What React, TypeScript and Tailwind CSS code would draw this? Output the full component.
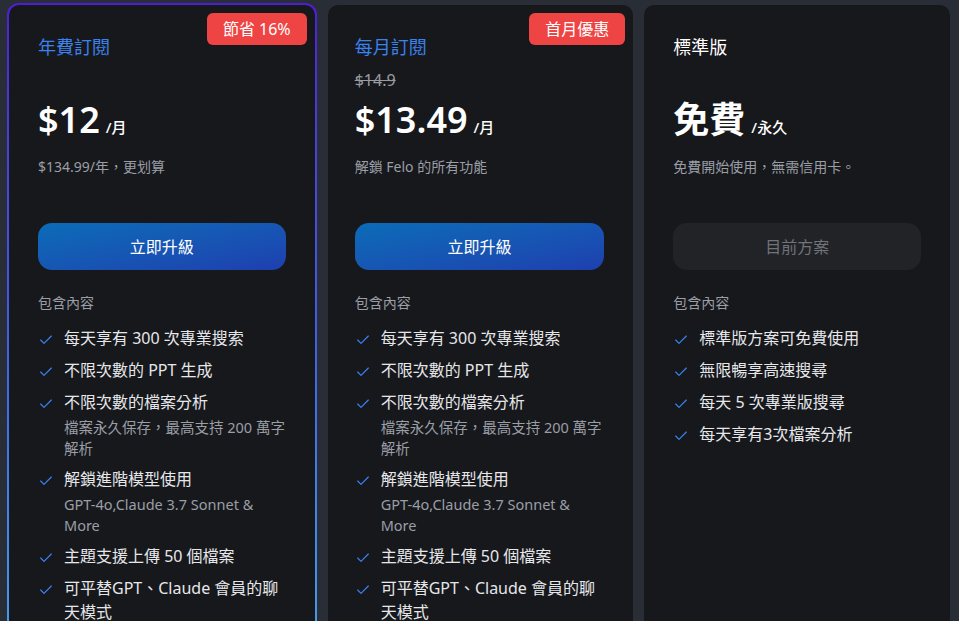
import { Check } from 'lucide-react';

interface Feature {
  text: string;
  sub?: string;
}

interface Plan {
  title: string;
  titleColor: string;
  pad: string;
  oldPrice?: string;
  price: string;
  unit: string;
  note: string;
  badge?: string;
  button: string;
  current?: boolean;
  highlight?: boolean;
  features: Feature[];
}

const proFeatures: Feature[] = [
  { text: '每天享有 300 次專業搜索' },
  { text: '不限次數的 PPT 生成' },
  { text: '不限次數的檔案分析', sub: '檔案永久保存，最高支持 200 萬字解析' },
  { text: '解鎖進階模型使用', sub: 'GPT-4o,Claude 3.7 Sonnet & More' },
  { text: '主題支援上傳 50 個檔案' },
  { text: '可平替GPT、Claude 會員的聊天模式' },
];

const plans: Plan[] = [
  {
    title: '年費訂閱',
    titleColor: 'text-[#3a82ec]',
    pad: 'px-[29px]',
    price: '$12',
    unit: '/月',
    note: '$134.99/年，更划算',
    badge: '節省 16%',
    button: '立即升級',
    highlight: true,
    features: proFeatures,
  },
  {
    title: '每月訂閱',
    titleColor: 'text-[#3a82ec]',
    pad: 'pl-[27px] pr-[29px]',
    oldPrice: '$14.9',
    price: '$13.49',
    unit: '/月',
    note: '解鎖 Felo 的所有功能',
    badge: '首月優惠',
    button: '立即升級',
    features: proFeatures,
  },
  {
    title: '標準版',
    titleColor: 'text-white',
    pad: 'px-[29px]',
    price: '免費',
    unit: '/永久',
    note: '免費開始使用，無需信用卡。',
    button: '目前方案',
    current: true,
    features: [
      { text: '標準版方案可免費使用' },
      { text: '無限暢享高速搜尋' },
      { text: '每天 5 次專業版搜尋' },
      { text: '每天享有3次檔案分析' },
    ],
  },
];

function PlanCard({ plan }: { plan: Plan }) {
  return (
    <div className={`relative h-full rounded-[10px] bg-[#17181c] pt-[28px] pb-10 ${plan.pad}`}>
      {plan.badge && (
        <div className="absolute top-[8px] right-[8px] h-8 rounded-md bg-[#ef4444] px-4 text-[16px] leading-8 text-white">
          {plan.badge}
        </div>
      )}
      <div className={`text-lg leading-7 ${plan.titleColor}`}>{plan.title}</div>
      <div className="mt-[7px] h-6 text-[16px] leading-6 text-[#9a9ca2] line-through">
        {plan.oldPrice}
      </div>
      <div className="mt-2 flex items-baseline gap-[6px]">
        <span className="text-[36px] font-semibold leading-10 text-white">{plan.price}</span>
        <span className="text-[15px] font-medium text-white">{plan.unit}</span>
      </div>
      <div className="mt-[17px] text-[14px] leading-5 text-[#9a9ea6]">{plan.note}</div>
      <button
        className={
          plan.current
            ? 'mt-[46px] h-[47px] w-full rounded-[14px] bg-[#222327] text-[16px] text-[#70737a]'
            : 'mt-[46px] h-[47px] w-full rounded-[14px] bg-linear-to-br from-[#0a6cb8] to-[#1e3faf] text-[16px] text-white'
        }
      >
        {plan.button}
      </button>
      <div className="mt-[23px] text-[14px] leading-5 text-[#9a9ea6]">包含內容</div>
      <ul className="mt-[13px] flex flex-col gap-2">
        {plan.features.map((f) => (
          <li key={f.text} className="flex gap-[10px]">
            <Check className="mt-[6px] h-4 w-4 shrink-0 text-[#3b82f6]" strokeWidth={1.75} />
            <div>
              <div className="text-[16px] leading-6 text-[#e6e7ea]">{f.text}</div>
              {f.sub && (
                <div className="mt-[3px] text-[14.5px] leading-[21px] text-[#9a9ea6]">{f.sub}</div>
              )}
            </div>
          </li>
        ))}
      </ul>
    </div>
  );
}

export default function App() {
  return (
    <div
      className="h-[621px] overflow-hidden bg-[#292d36] pl-[7px] pr-[9px] pt-[3px]"
      style={{ fontFamily: '"Noto Sans", "Noto Sans CJK TC", sans-serif' }}
    >
      <div className="flex gap-[11px]">
        {plans.map((plan) =>
          plan.highlight ? (
            <div
              key={plan.title}
              className="flex-1 rounded-[12px] bg-linear-to-b from-[#4c1fd6] via-[#3f5fe6] to-[#46a0f0] p-[2px]"
            >
              <PlanCard plan={plan} />
            </div>
          ) : (
            <div key={plan.title} className="mt-[2px] flex-1">
              <PlanCard plan={plan} />
            </div>
          )
        )}
      </div>
    </div>
  );
}
